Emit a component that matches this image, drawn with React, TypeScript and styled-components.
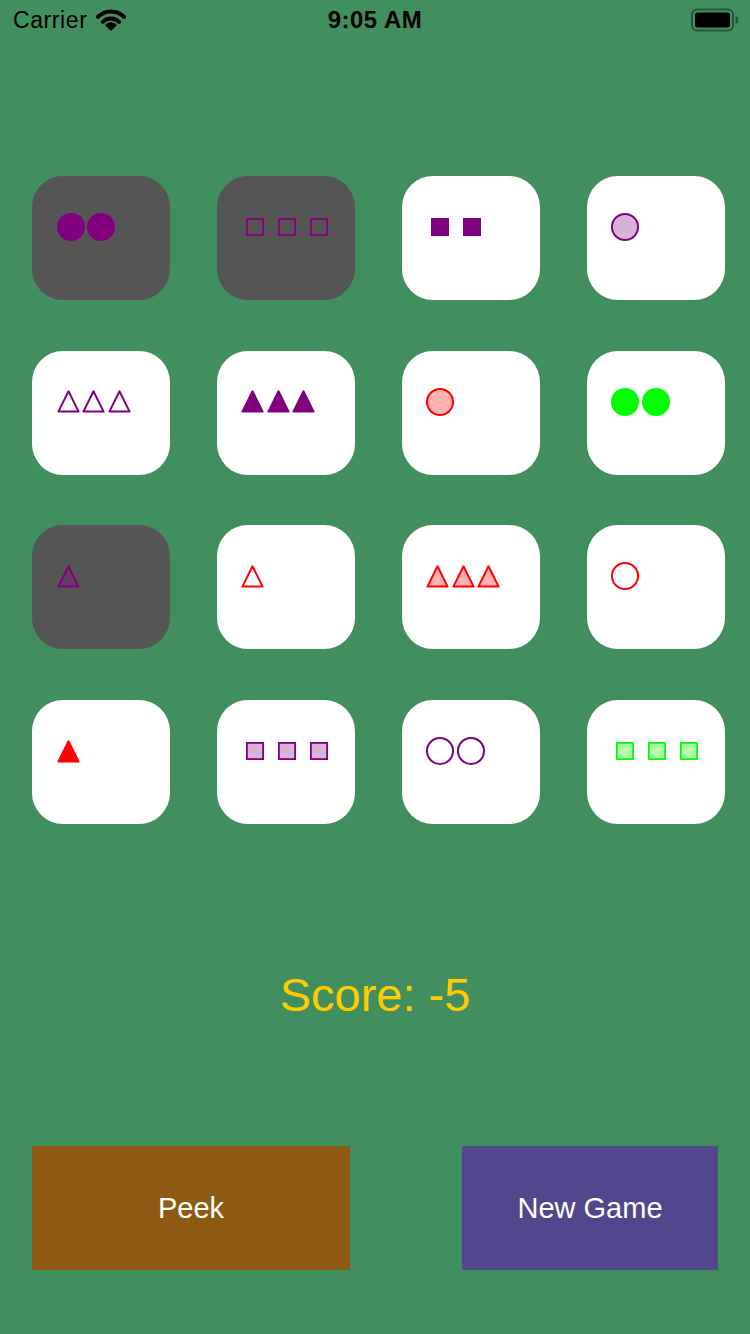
import React from "react";
import styled, { createGlobalStyle } from "styled-components";

const GlobalStyle = createGlobalStyle`
  html, body {
    margin: 0;
    padding: 0;
    background: #418f5f;
  }
  * { box-sizing: border-box; }
`;

type ShapeKind = "circle" | "square" | "triangle";
type Shading = "solid" | "striped" | "open";

const PURPLE = "#800080";
const RED = "#ff0000";
const GREEN = "#00ff00";

interface CardData {
  dimmed?: boolean;
  count: number;
  shape: ShapeKind;
  shading: Shading;
  color: string;
}

const cards: CardData[] = [
  { dimmed: true, count: 2, shape: "circle", shading: "solid", color: PURPLE },
  { dimmed: true, count: 3, shape: "square", shading: "open", color: PURPLE },
  { count: 2, shape: "square", shading: "solid", color: PURPLE },
  { count: 1, shape: "circle", shading: "striped", color: PURPLE },
  { count: 3, shape: "triangle", shading: "open", color: PURPLE },
  { count: 3, shape: "triangle", shading: "solid", color: PURPLE },
  { count: 1, shape: "circle", shading: "striped", color: RED },
  { count: 2, shape: "circle", shading: "solid", color: GREEN },
  { dimmed: true, count: 1, shape: "triangle", shading: "striped", color: PURPLE },
  { count: 1, shape: "triangle", shading: "open", color: RED },
  { count: 3, shape: "triangle", shading: "striped", color: RED },
  { count: 1, shape: "circle", shading: "open", color: RED },
  { count: 1, shape: "triangle", shading: "solid", color: RED },
  { count: 3, shape: "square", shading: "striped", color: PURPLE },
  { count: 2, shape: "circle", shading: "open", color: PURPLE },
  { count: 3, shape: "square", shading: "striped", color: GREEN },
];

const Page = styled.div`
  width: 750px;
  height: 1334px;
  background: #418f5f;
  display: flex;
  flex-direction: column;
  overflow: hidden;
  font-family: "Liberation Sans", Arial, sans-serif;
`;

const StatusBar = styled.div`
  height: 40px;
  display: grid;
  grid-template-columns: 1fr auto 1fr;
  align-items: center;
  color: #000;
`;

const StatusLeft = styled.div`
  display: flex;
  align-items: center;
  gap: 9px;
  padding-left: 13px;
  font-size: 23px;
  letter-spacing: 0.6px;
`;

const StatusTime = styled.div`
  font-size: 24px;
  font-weight: 700;
  letter-spacing: 0.5px;
`;

const StatusRight = styled.div`
  display: flex;
  justify-content: flex-end;
  padding-right: 12px;
`;

const Grid = styled.div`
  margin-top: 136px;
  padding-left: 32px;
  display: grid;
  grid-template-columns: repeat(4, 138px);
  column-gap: 46.9px;
  row-gap: 50.7px;
`;

const Card = styled.div<{ $dimmed?: boolean }>`
  width: 138px;
  height: 124px;
  border-radius: 31px;
  background: ${(p) => (p.$dimmed ? "#555555" : "#ffffff")};
  padding: 37px 0 0 24.5px;
`;

const ShapeRow = styled.div<{ $gap: number }>`
  height: 28px;
  display: flex;
  align-items: center;
  gap: ${(p) => p.$gap}px;
`;

const Slot = styled.div<{ $w: number }>`
  width: ${(p) => p.$w}px;
  height: 28px;
  display: flex;
  align-items: center;
  justify-content: center;
  svg { display: block; }
`;

const Score = styled.div`
  margin-top: 147px;
  text-align: center;
  font-size: 47px;
  line-height: 47px;
  color: #ffcc00;
`;

const ButtonRow = styled.div`
  margin-top: 128px;
  padding-left: 32px;
  display: flex;
  gap: 112px;
`;

const ActionButton = styled.div<{ $bg: string; $w: number }>`
  width: ${(p) => p.$w}px;
  height: 124px;
  background: ${(p) => p.$bg};
  color: #ffffff;
  font-size: 29px;
  display: flex;
  align-items: center;
  justify-content: center;
`;

function fillFor(shading: Shading, color: string) {
  if (shading === "solid") return { fill: color, fillOpacity: 1 };
  if (shading === "striped") return { fill: color, fillOpacity: 0.3 };
  return { fill: "none", fillOpacity: 1 };
}

const ShapeIcon: React.FC<{ kind: ShapeKind; shading: Shading; color: string }> = ({
  kind,
  shading,
  color,
}) => {
  const f = fillFor(shading, color);
  if (kind === "circle") {
    if (shading === "solid") {
      return (
        <svg width="28" height="28" viewBox="0 0 28 28">
          <circle cx="14" cy="14" r="14" fill={color} />
        </svg>
      );
    }
    return (
      <svg width="28" height="28" viewBox="0 0 28 28">
        <circle cx="14" cy="14" r="13" fill={f.fill} fillOpacity={f.fillOpacity} stroke={color} strokeWidth="2" />
      </svg>
    );
  }
  if (kind === "square") {
    if (shading === "solid") {
      return (
        <svg width="18" height="18" viewBox="0 0 18 18">
          <rect x="0" y="0" width="18" height="18" fill={color} />
        </svg>
      );
    }
    return (
      <svg width="18" height="18" viewBox="0 0 18 18">
        <rect x="0.9" y="0.9" width="16.2" height="16.2" fill={f.fill} fillOpacity={f.fillOpacity} stroke={color} strokeWidth="1.8" />
      </svg>
    );
  }
  return (
    <svg width="23" height="23" viewBox="0 0 23 23">
      <path
        d="M1.4 21.6 L11.5 1.3 L21.6 21.6 Z"
        fill={f.fill}
        fillOpacity={f.fillOpacity}
        stroke={color}
        strokeWidth="2"
        strokeLinejoin="round"
      />
    </svg>
  );
};

const slotWidth: Record<ShapeKind, number> = { circle: 28, square: 28, triangle: 23 };
const slotGap: Record<ShapeKind, number> = { circle: 2.5, square: 3.7, triangle: 2.5 };

const WifiIcon = () => (
  <svg width="30" height="22" viewBox="0 0 30 22">
    <path d="M1.9 7.9 A18.5 18.5 0 0 1 28.1 7.9" fill="none" stroke="#000" strokeWidth="4" strokeLinecap="round" />
    <path d="M6.9 12.9 A11.5 11.5 0 0 1 23.1 12.9" fill="none" stroke="#000" strokeWidth="4" strokeLinecap="round" />
    <path d="M15 21.5 L9.5 16 A7.8 7.8 0 0 1 20.5 16 Z" fill="#000" strokeLinejoin="round" stroke="#000" strokeWidth="1" />
  </svg>
);

const BatteryIcon = () => (
  <svg width="47" height="24" viewBox="0 0 47 24">
    <rect x="1" y="1.5" width="41" height="21" rx="5" fill="none" stroke="#000" strokeOpacity="0.4" strokeWidth="2" />
    <rect x="4" y="4.5" width="35" height="15" rx="2.5" fill="#000" />
    <path d="M44.5 8.5 A3.5 3.5 0 0 1 44.5 15.5 Z" fill="#000" fillOpacity="0.4" />
  </svg>
);

export default function App() {
  return (
    <>
      <GlobalStyle />
      <Page>
        <StatusBar>
          <StatusLeft>
            <span>Carrier</span>
            <WifiIcon />
          </StatusLeft>
          <StatusTime>9:05 AM</StatusTime>
          <StatusRight>
            <BatteryIcon />
          </StatusRight>
        </StatusBar>

        <Grid>
          {cards.map((c, i) => (
            <Card key={i} $dimmed={c.dimmed}>
              <ShapeRow $gap={slotGap[c.shape]}>
                {Array.from({ length: c.count }).map((_, j) => (
                  <Slot key={j} $w={slotWidth[c.shape]}>
                    <ShapeIcon kind={c.shape} shading={c.shading} color={c.color} />
                  </Slot>
                ))}
              </ShapeRow>
            </Card>
          ))}
        </Grid>

        <Score>Score: -5</Score>

        <ButtonRow>
          <ActionButton $bg="#8e5b15" $w={318}>Peek</ActionButton>
          <ActionButton $bg="#52468c" $w={256}>New Game</ActionButton>
        </ButtonRow>
      </Page>
    </>
  );
}
